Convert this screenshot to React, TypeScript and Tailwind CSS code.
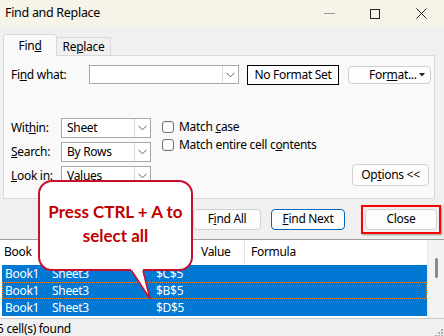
import React from "react";

const font = "font-['Noto_Sans',sans-serif] tracking-[-0.3px]";

function Chevron() {
  return (
    <svg width="9" height="6" viewBox="0 0 9 6" className="text-[#606060]">
      <path d="M0.5 0.8 L4.5 4.8 L8.5 0.8" fill="none" stroke="currentColor" strokeWidth="1" />
    </svg>
  );
}

function Combo({ value, w = "w-[90px]" }: { value: string; w?: string }) {
  return (
    <div className={`${w} h-[20px] flex bg-white border border-[#a8a8a8]`}>
      <div className="flex-1 pl-[5px] leading-[18px]">{value}</div>
      <div className="w-[16px] border-l border-[#d8d8d8] flex items-center justify-center">
        <Chevron />
      </div>
    </div>
  );
}

function Btn({ children, className = "" }: { children: React.ReactNode; className?: string }) {
  return (
    <div
      className={`h-[21px] flex items-center justify-center rounded-[4px] bg-[#fdfdfd] border border-[#d0d0d0] ${className}`}
    >
      {children}
    </div>
  );
}

function Check({ children }: { children: React.ReactNode }) {
  return (
    <div className="flex items-center gap-[5px] h-[17px]">
      <div className="w-[12px] h-[12px] rounded-[3px] border border-[#6e6e6e] bg-[#fafafa]" />
      <span>{children}</span>
    </div>
  );
}

export default function App() {
  return (
    <div className={`relative w-[444px] h-[336px] overflow-hidden bg-[#f0f0f0] text-[12px] text-black ${font}`}>
      {/* title bar */}
      <div className="h-[27px] bg-[#f6f4e9] flex items-center pl-[5px]">
        <span className="text-[12.5px]">Find and Replace</span>
        <div className="ml-auto flex items-center h-full">
          <div className="w-[46px] flex justify-center">
            <div className="w-[11px] h-px bg-[#9a9a9a]" />
          </div>
          <div className="w-[46px] flex justify-center">
            <div className="w-[10px] h-[10px] border border-[#222]" />
          </div>
          <div className="w-[46px] flex justify-center">
            <svg width="11" height="11" viewBox="0 0 11 11">
              <path d="M0.5 0.5 L10.5 10.5 M10.5 0.5 L0.5 10.5" stroke="#222" strokeWidth="1" />
            </svg>
          </div>
        </div>
      </div>

      {/* tabs */}
      <div className="h-[28px] pl-[3px] flex items-end">
        <div className="h-[22px] w-[54px] bg-[#f9f9f9] border border-b-0 border-[#d9d9d9] rounded-t-[3px] flex items-center justify-center relative top-px">
          Fin<u>d</u>
        </div>
        <div className="h-[18px] w-[54px] bg-[#f0f0f0] border border-l-0 border-b-0 border-[#d9d9d9] flex items-center justify-center">
          Re<u>p</u>lace
        </div>
      </div>

      {/* panel */}
      <div className="ml-[3px] w-[432px] h-[144px] bg-[#f9f9f9] border border-[#d9d9d9] pt-[9px]">
        <div className="flex items-center h-[19px]">
          <div className="w-[85px] pl-[7px]">
            Fi<u>n</u>d what:
          </div>
          <div className="w-[150px] h-[19px] flex bg-white border border-[#a8a8a8]">
            <div className="flex-1" />
            <div className="w-[16px] border-l border-[#d8d8d8] flex items-center justify-center">
              <Chevron />
            </div>
          </div>
          <div className="ml-[8px] w-[92px] h-[20px] border border-black bg-white flex items-center justify-center">
            No Format Set
          </div>
          <div className="ml-[9px] w-[83px] h-[18px] rounded-[4px] border border-[#d0d0d0] bg-[#fdfdfd] flex items-center pl-[20px] pr-[5px]">
            <span>
              For<u>m</u>at...
            </span>
            <svg width="6" height="4" viewBox="0 0 6 4" className="ml-auto">
              <path d="M0 0 L6 0 L3 3.5 Z" fill="#222" />
            </svg>
          </div>
        </div>

        <div className="mt-[34px] flex">
          <div className="flex flex-col gap-[4px]">
            {[
              [<>Wit<u>h</u>in:</>, "Sheet"],
              [<><u>S</u>earch:</>, "By Rows"],
              [<><u>L</u>ook in:</>, "Values"],
            ].map(([label, value], i) => (
              <div key={i} className="flex items-center">
                <div className="w-[57px] pl-[7px]">{label}</div>
                <Combo value={value as string} />
              </div>
            ))}
          </div>
          <div className="ml-[11px] flex flex-col gap-[1px]">
            <Check>
              Match <u>c</u>ase
            </Check>
            <Check>
              Match entire cell c<u>o</u>ntents
            </Check>
          </div>
          <div className="ml-auto mr-[5px] self-end">
            <Btn className="w-[77px] h-[22px]">
              Op<u>t</u>ions &lt;&lt;
            </Btn>
          </div>
        </div>
      </div>

      {/* buttons */}
      <div className="h-[40px] flex items-center justify-end pr-[3px]">
        <Btn className="w-[68px]">
          F<u>i</u>nd All
        </Btn>
        <Btn className="ml-[10px] w-[74px] !border-[#0067c0]">
          <u>F</u>ind Next
        </Btn>
        <div className="ml-[16px] border-2 border-[#ff0000] p-[2px] shadow-[1px_1px_2px_rgba(0,0,0,0.35)]">
          <Btn className="w-[72px]">Close</Btn>
        </div>
      </div>

      {/* list */}
      <div className="h-[79px] border-t border-[#a0a0a0] bg-white flex">
        <div className="flex-1 flex flex-col">
          <div className="h-[24px] flex items-center">
            <div className="w-[48px] pl-[4px]">Book</div>
            <div className="w-[104px] pl-[1px]">Sheet</div>
            <div className="w-[44px] pl-[1px] border-l border-[#e5e5e5]">Name</div>
            <div className="w-[48px] pl-[5px]">Value</div>
            <div className="pl-[6px] h-full flex items-center border-l border-[#e5e5e5]">Formula</div>
          </div>
          <div className="ml-[2px] mt-[1px] bg-[#0078d4] text-white flex flex-col">
            {[
              ["Book1", "Sheet3", "$C$5", false],
              ["Book1", "Sheet3", "$B$5", true],
              ["Book1", "Sheet3", "$D$5", false],
            ].map(([b, s, c, focus], i) => (
              <div
                key={i}
                className={`h-[17px] flex items-center ${
                  focus ? "border border-dotted border-[#ff8c1a]" : "border border-transparent"
                }`}
              >
                <div className="w-[49px] pl-[2px]">{b as string}</div>
                <div className="w-[104px]">{s as string}</div>
                <div>{c as string}</div>
              </div>
            ))}
          </div>
        </div>
        <div className="w-[17px] bg-[#f3f3f3] border-l border-[#e8e8e8] flex justify-center">
          <div className="mt-[18px] w-[3px] h-[20px] rounded-full bg-[#8a8a8a]" />
        </div>
      </div>

      {/* status */}
      <div className="h-[20px] border-t border-[#c8c8c8] flex items-center">
        <span className="-ml-[3px]">5 cell(s) found</span>
        <div className="ml-auto mr-[1px] mt-[8px] grid grid-cols-3 gap-[1px]">
          {[0, 0, 1, 0, 1, 1, 1, 1, 1].map((v, i) => (
            <div key={i} className={`w-[2px] h-[2px] ${v ? "bg-[#b0b0b0]" : ""}`} />
          ))}
        </div>
      </div>

      {/* callout */}
      <div className="absolute left-[38px] top-[180px] w-[155px] h-[91px] bg-white border-2 border-[#c8102e] rounded-[14px] flex flex-col items-center justify-center font-['Lato',sans-serif] tracking-normal font-bold text-[17px] leading-[24px] text-[#c00000] pb-[4px]">
        <span>Press CTRL + A to</span>
        <span>select all</span>
      </div>
      <svg className="absolute left-[128px] top-[268px]" width="26" height="34" viewBox="0 0 26 34">
        <path d="M3 0 L3 2 L22 31 L15 2 L15 0 Z" fill="white" />
        <path d="M3.5 2.5 L22 31 L15 2.5" fill="none" stroke="#c8102e" strokeWidth="1.6" />
      </svg>
    </div>
  );
}
